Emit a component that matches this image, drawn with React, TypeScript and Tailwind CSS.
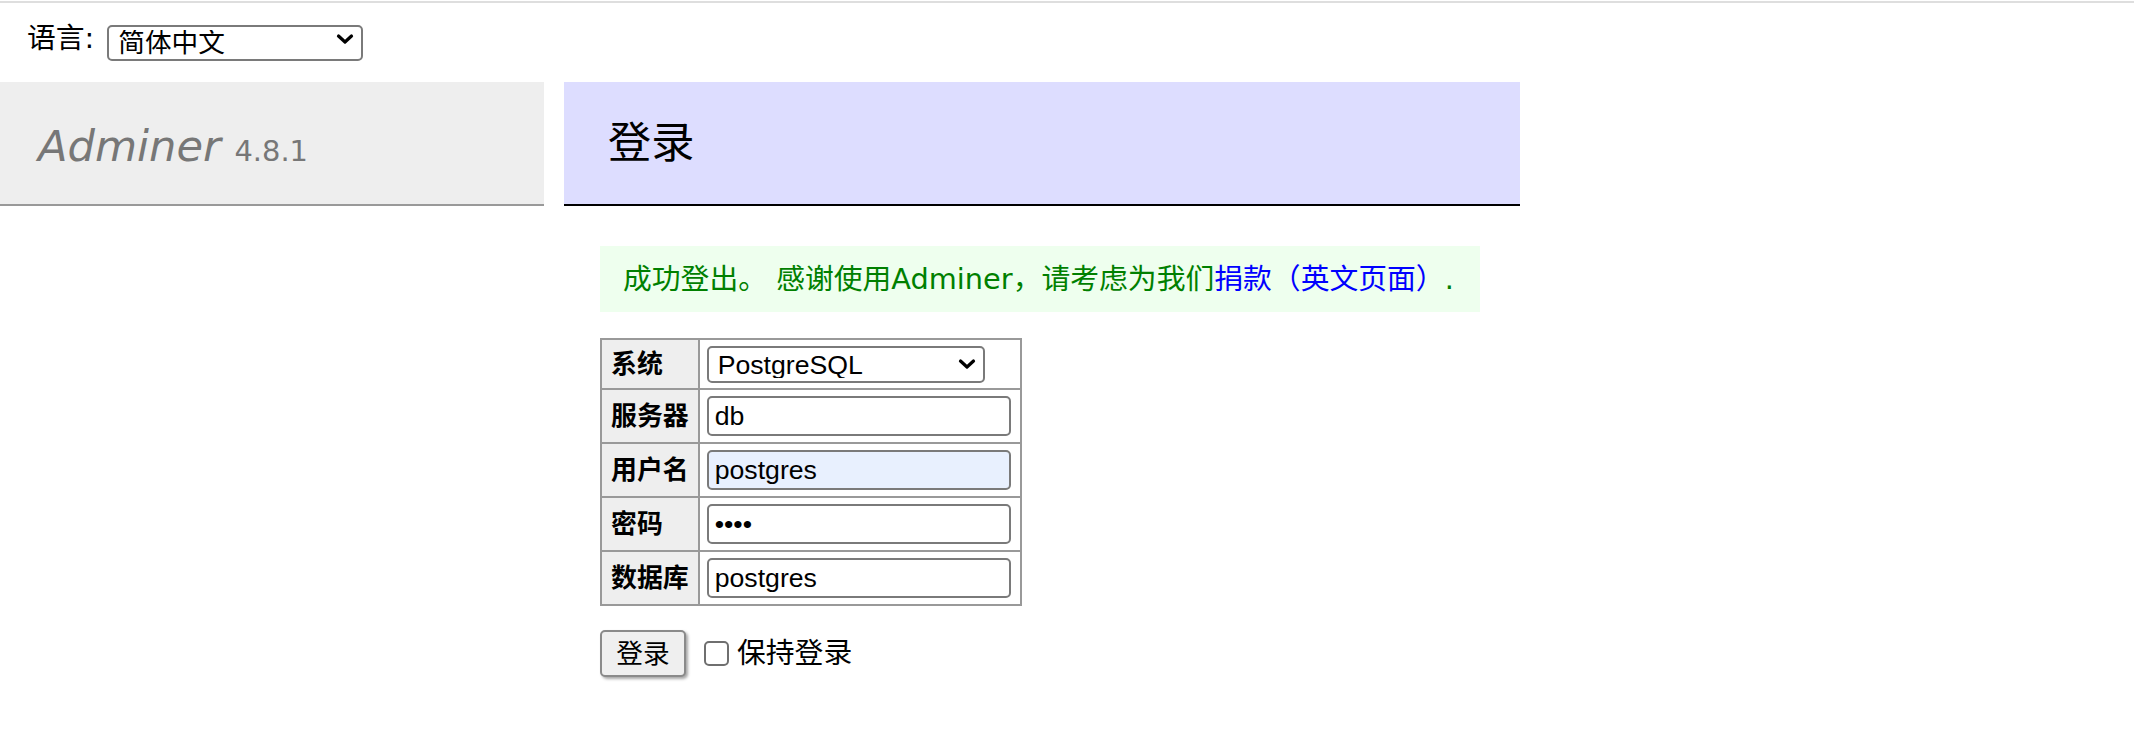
import { useState } from 'react';

const bodyFont = "font-['DejaVu_Sans','Noto_Sans_CJK_SC',sans-serif]";
const ctrlFont = "font-['Liberation_Sans','Noto_Sans_CJK_SC',sans-serif]";

function Chevron() {
    return (
        <svg width="18" height="11" viewBox="0 0 18 11" className="pointer-events-none absolute right-[9px] top-1/2 -translate-y-1/2">
            <path d="M2.5 2.5 L9 8.5 L15.5 2.5" fill="none" stroke="#000" strokeWidth="3.2" strokeLinecap="round" strokeLinejoin="round" />
        </svg>
    );
}

function Select({ value, options, className }: { value: string; options: string[]; className: string }) {
    const [v, setV] = useState(value);
    return (
        <div className={`relative ${className}`}>
            <select
                value={v}
                onChange={(e) => setV(e.target.value)}
                className={`${ctrlFont} h-full w-full appearance-none rounded-[5px] border-2 border-[#7a7a7a] bg-white pl-[9px] text-[26.67px] leading-none text-black outline-none`}
            >
                {options.map((o) => (
                    <option key={o}>{o}</option>
                ))}
            </select>
            <Chevron />
        </div>
    );
}

const rows = [
    { label: '服务器', value: 'db', type: 'text' },
    { label: '用户名', value: 'postgres', type: 'text', autofill: true },
    { label: '密码', value: 'abcd', type: 'password' },
    { label: '数据库', value: 'postgres', type: 'text' },
];

export default function App() {
    const [keep, setKeep] = useState(false);

    return (
        <div className={`${bodyFont} min-h-screen bg-white text-black`}>
            <div className="mt-px h-[2px] bg-[#dedede]" />

            <div className="flex h-[72px] items-center pl-[27px] text-[28.8px]">
                <span>语言:</span>
                <Select value="简体中文" options={['简体中文', 'English', '繁體中文', '日本語']} className="ml-[13px] h-[36px] w-[256px]" />
            </div>

            <div className="mt-[7px] flex items-start">
                <div className="w-[544px]">
                    <h1 className="h-[124px] border-b-2 border-[#999] bg-[#eee] pl-[38px] pt-[37px] text-[43.2px] leading-[54px] text-[#777]">
                        <a href="#" className="italic">Adminer</a>{' '}
                        <span className="text-[28.9px]">4.8.1</span>
                    </h1>
                </div>

                <div className="ml-[20px] w-[956px]">
                    <h2 className="flex h-[124px] items-center border-b-2 border-black bg-[#ddf] pl-[44px] text-[43.2px] text-black">
                        登录
                    </h2>

                    <div className="pl-[36px]">
                        <div className="mt-[40px] w-[880px] bg-[#efe] px-[23px] py-[15px] text-[28.8px] leading-[36px] text-[#008000]">
                            成功登出。 感谢使用Adminer，请考虑为我们<a href="#" className="text-[#0000ff]">捐款（英文页面）</a>.
                        </div>

                        <table className="mt-[26px] border-collapse whitespace-nowrap text-[25.9px]">
                            <tbody>
                                <tr className="h-[50px]">
                                    <th className="w-[94px] border-2 border-[#999] bg-[#eee] px-[9px] text-left align-middle font-bold">系统</th>
                                    <td className="w-[322px] border-2 border-[#999] px-[7px] align-middle">
                                        <Select value="PostgreSQL" options={['MySQL', 'SQLite 3', 'PostgreSQL', 'Oracle (beta)', 'MS SQL (beta)']} className="h-[37px] w-[278px]" />
                                    </td>
                                </tr>
                                {rows.map((r) => (
                                    <tr key={r.label} className="h-[54px]">
                                        <th className="border-2 border-[#999] bg-[#eee] px-[9px] text-left align-middle font-bold">{r.label}</th>
                                        <td className="border-2 border-[#999] px-[7px] align-middle">
                                            <input
                                                type={r.type}
                                                defaultValue={r.value}
                                                className={`${ctrlFont} block h-[40px] w-[304px] rounded-[5px] border-2 border-[#7a7a7a] px-[6px] text-[26.67px] text-black outline-none ${r.autofill ? 'bg-[#e8f0fe]' : 'bg-white'}`}
                                            />
                                        </td>
                                    </tr>
                                ))}
                            </tbody>
                        </table>

                        <div className="mt-[24px] flex items-center">
                            <button className="h-[47px] w-[86px] rounded-[5px] border-2 border-[#8a8a8a] bg-[#efefef] text-[26.67px] text-black shadow-[2px_2px_3px_rgba(0,0,0,0.35)]">
                                登录
                            </button>
                            <label className="ml-[18px] flex items-center text-[28.8px]">
                                <input
                                    type="checkbox"
                                    checked={keep}
                                    onChange={(e) => setKeep(e.target.checked)}
                                    className="h-[25px] w-[25px] appearance-none rounded-[5px] border-2 border-[#6f6f6f] bg-white checked:bg-[#0075ff]"
                                />
                                <span className="ml-[8px]">保持登录</span>
                            </label>
                        </div>
                    </div>
                </div>
            </div>
        </div>
    );
}
